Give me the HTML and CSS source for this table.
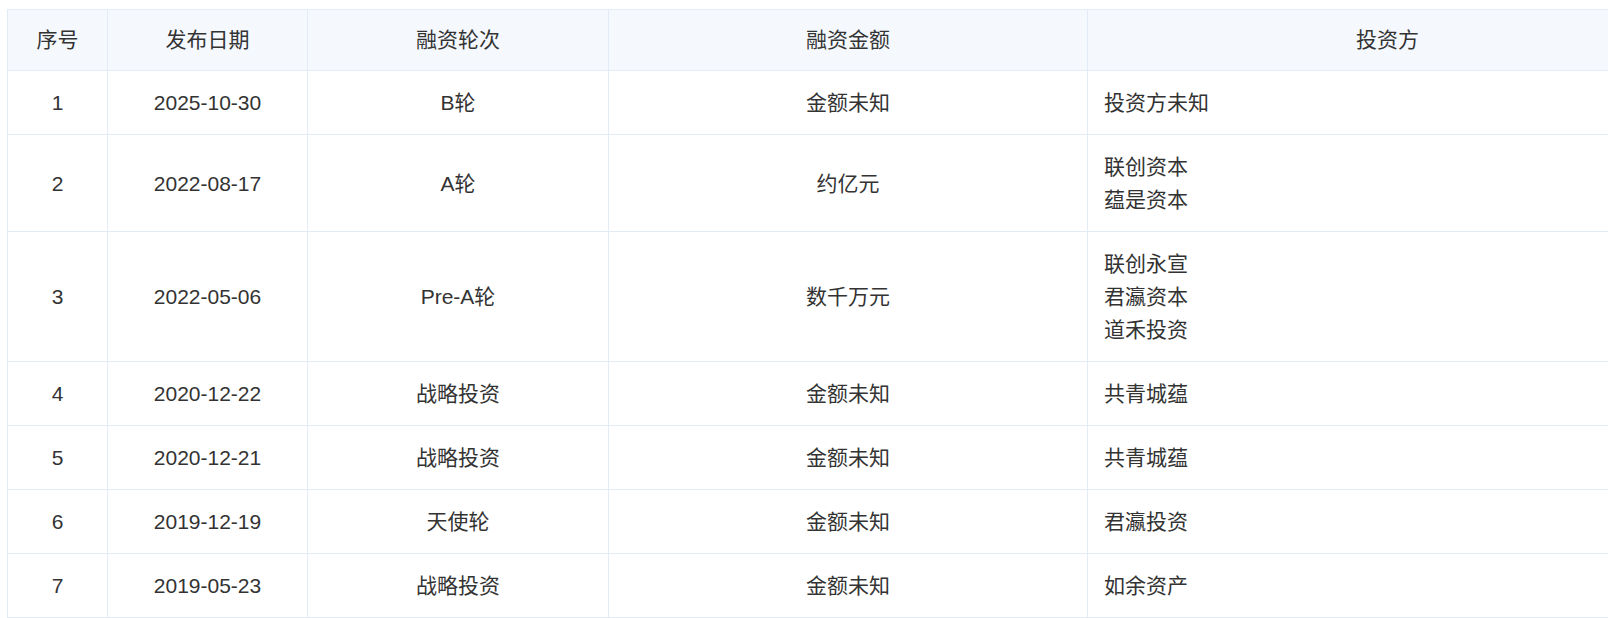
FILE: index.html
```html
<!DOCTYPE html>
<html lang="zh-CN">
<head>
<meta charset="utf-8">
<title>融资历程</title>
<link rel="stylesheet" href="styles.css">
</head>
<body>
<div class="wrap">
  <table class="fin-table">
    <colgroup>
      <col class="c-idx">
      <col class="c-date">
      <col class="c-round">
      <col class="c-amount">
      <col class="c-inv">
    </colgroup>
    <thead>
      <tr>
        <th>序号</th>
        <th>发布日期</th>
        <th>融资轮次</th>
        <th>融资金额</th>
        <th>投资方</th>
      </tr>
    </thead>
    <tbody>
      <tr>
        <td>1</td><td>2025-10-30</td><td>B轮</td><td>金额未知</td>
        <td class="inv"><div>投资方未知</div></td>
      </tr>
      <tr>
        <td>2</td><td>2022-08-17</td><td>A轮</td><td>约亿元</td>
        <td class="inv"><div>联创资本</div><div>蕴是资本</div></td>
      </tr>
      <tr>
        <td>3</td><td>2022-05-06</td><td>Pre-A轮</td><td>数千万元</td>
        <td class="inv"><div>联创永宣</div><div>君瀛资本</div><div>道禾投资</div></td>
      </tr>
      <tr>
        <td>4</td><td>2020-12-22</td><td>战略投资</td><td>金额未知</td>
        <td class="inv"><div>共青城蕴</div></td>
      </tr>
      <tr>
        <td>5</td><td>2020-12-21</td><td>战略投资</td><td>金额未知</td>
        <td class="inv"><div>共青城蕴</div></td>
      </tr>
      <tr>
        <td>6</td><td>2019-12-19</td><td>天使轮</td><td>金额未知</td>
        <td class="inv"><div>君瀛投资</div></td>
      </tr>
      <tr>
        <td>7</td><td>2019-05-23</td><td>战略投资</td><td>金额未知</td>
        <td class="inv"><div>如余资产</div></td>
      </tr>
    </tbody>
  </table>
</div>
</body>
</html>
```

FILE: styles.css
```css
html, body {
  margin: 0;
  padding: 0;
  background: #ffffff;
  overflow: hidden;
}

.wrap {
  padding: 9px 0 0 7px;
  width: 1740px;
}

.fin-table {
  border-collapse: collapse;
  table-layout: fixed;
  width: 1680px;
  font-family: "Liberation Sans", "Noto Sans CJK SC", sans-serif;
  font-size: 21px;
  line-height: 33px;
  color: #333333;
}

.c-idx { width: 100px; }
.c-date { width: 200px; }
.c-round { width: 301px; }
.c-amount { width: 479px; }
.c-inv { width: 600px; }

.fin-table th,
.fin-table td {
  border: 1px solid #e3ebf6;
  text-align: center;
  vertical-align: middle;
  font-weight: normal;
}

.fin-table th {
  background: #f5f9fe;
  padding: 13px 18px 14px;
}

.fin-table td {
  padding: 15px 18px;
}

.fin-table td.inv {
  text-align: left;
  padding-left: 16px;
}
```
